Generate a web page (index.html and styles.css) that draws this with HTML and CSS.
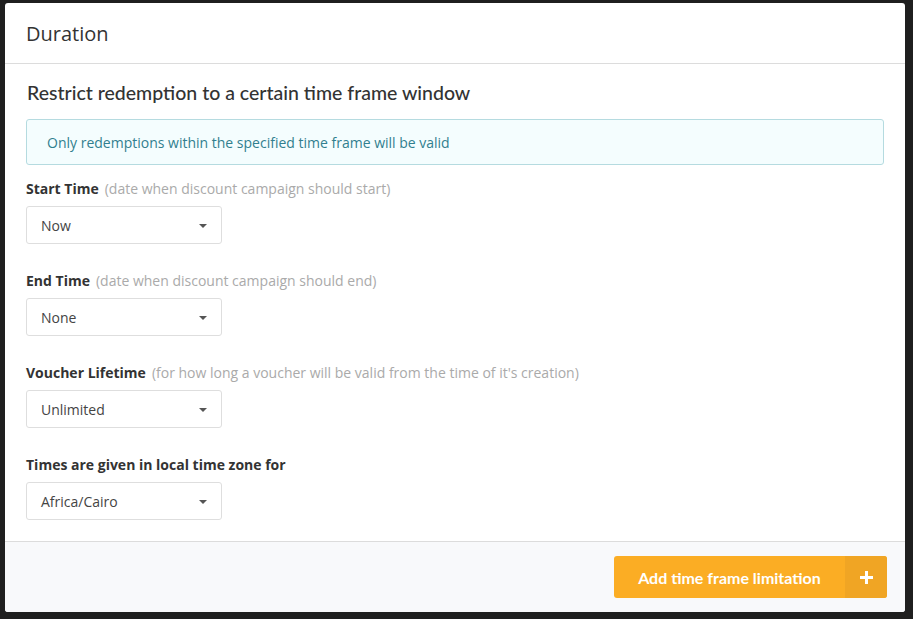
FILE: index.html
```html
<!DOCTYPE html>
<html>
<head>
<meta charset="utf-8">
<link rel="stylesheet" href="styles.css">
</head>
<body>
<div class="modal">
  <div class="modal-header">Duration</div>
  <div class="modal-body">
    <h2 class="section-title">Restrict redemption to a certain time frame window</h2>
    <div class="alert">Only redemptions within the specified time frame will be valid</div>
    <div class="fields">
      <div class="field">
        <div class="label"><b>Start Time</b><span class="hint">(date when discount campaign should start)</span></div>
        <div class="select"><span>Now</span><i class="caret"></i></div>
      </div>
      <div class="field">
        <div class="label"><b>End Time</b><span class="hint">(date when discount campaign should end)</span></div>
        <div class="select"><span>None</span><i class="caret"></i></div>
      </div>
      <div class="field">
        <div class="label"><b>Voucher Lifetime</b><span class="hint">(for how long a voucher will be valid from the time of it's creation)</span></div>
        <div class="select"><span>Unlimited</span><i class="caret"></i></div>
      </div>
      <div class="field">
        <div class="label"><b>Times are given in local time zone for</b></div>
        <div class="select"><span>Africa/Cairo</span><i class="caret"></i></div>
      </div>
    </div>
  </div>
  <div class="modal-footer">
    <button class="btn-add"><span class="btn-text">Add time frame limitation</span><span class="btn-icon"><svg width="13" height="13" viewBox="0 0 13 13"><rect x="5" y="0" width="3" height="13" fill="#fff"/><rect x="0" y="5" width="13" height="3" fill="#fff"/></svg></span></button>
  </div>
</div>
</body>
</html>
```
FILE: styles.css
```css
html, body {
  margin: 0;
  padding: 0;
  background: #1f1f1f;
  height: 619px;
  overflow: hidden;
}
body {
  font-family: "Open Sans", "Liberation Sans", sans-serif;
  padding: 3px 0 0 5px;
  box-sizing: border-box;
}
.modal {
  width: 900px;
  height: 609px;
  background: #fff;
  border-radius: 3px;
  display: flex;
  flex-direction: column;
  overflow: hidden;
}
.modal-header {
  height: 61px;
  box-sizing: border-box;
  padding-left: 21px;
  display: flex;
  align-items: center;
  font-size: 20px;
  color: #333;
  border-bottom: 1px solid #dcdcdc;
}
.modal-body {
  padding: 17px 21px 21px 21px;
  border-bottom: 1px solid #dcdcdc;
}
.section-title {
  margin: 0 0 14px 1px;
  font-family: "Lato", "Open Sans", sans-serif;
  font-weight: 500;
  font-size: 19.5px;
  line-height: 24px;
  color: #333;
}
.alert {
  height: 46px;
  box-sizing: border-box;
  border: 1px solid #b5dbe0;
  background: #f4fdfe;
  border-radius: 3px;
  padding-left: 20px;
  display: flex;
  align-items: center;
  font-size: 14px;
  color: #317f8f;
  margin-bottom: 14px;
}
.fields {
  display: flex;
  flex-direction: column;
  gap: 27px;
}
.field {
  display: flex;
  flex-direction: column;
  gap: 7px;
}
.label {
  font-size: 14px;
  line-height: 20px;
  color: #333;
}
.label b {
  font-weight: 700;
}
.hint {
  color: #aaa;
  margin-left: 6px;
  font-size: 14px;
}
.select {
  width: 196px;
  height: 38px;
  box-sizing: border-box;
  border: 1px solid #dedede;
  border-radius: 3px;
  display: flex;
  align-items: center;
  justify-content: space-between;
  padding: 0 14px 0 14px;
  font-size: 14px;
  color: #444;
}
.caret {
  width: 0;
  height: 0;
  border-left: 4px solid transparent;
  border-right: 4px solid transparent;
  border-top: 4px solid #555;
  margin-top: 1px;
}
.modal-footer {
  flex: 1;
  background: #f8f9fb;
  display: flex;
  justify-content: flex-end;
  align-items: flex-start;
  padding: 14px 18px 0 0;
}
.btn-add {
  display: flex;
  height: 42px;
  border: 0;
  padding: 0;
  border-radius: 3px;
  overflow: hidden;
  background: #fbad24;
  cursor: pointer;
  font-family: "Lato", "Open Sans", sans-serif;
}
.btn-text {
  width: 231px;
  display: flex;
  align-items: center;
  justify-content: center;
  color: #fff;
  font-weight: 700;
  font-size: 16px;
}
.btn-icon {
  width: 42px;
  background: #f0a524;
  display: flex;
  align-items: center;
  justify-content: center;
}
```
